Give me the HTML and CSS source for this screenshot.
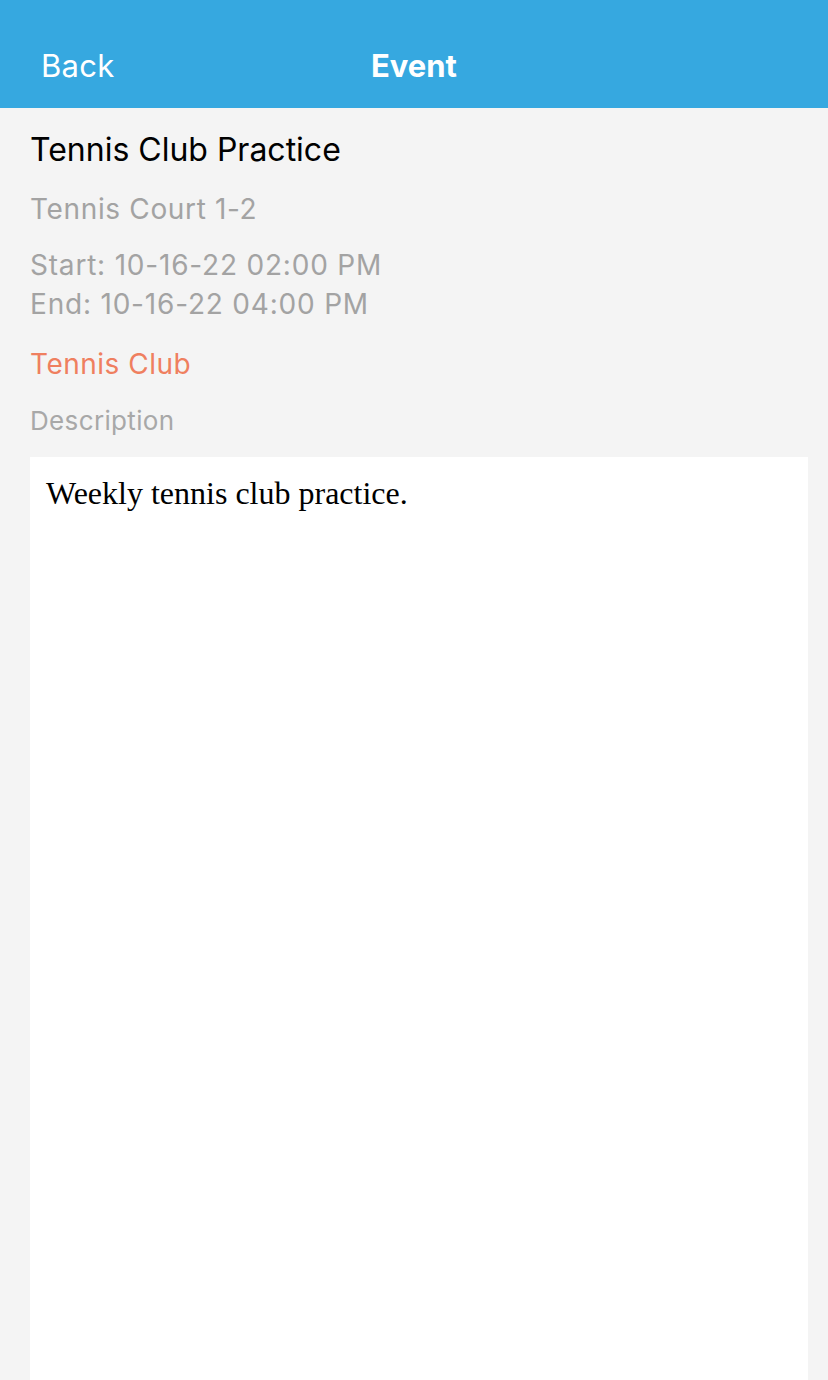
FILE: index.html
```html
<!DOCTYPE html>
<html>
<head>
<meta charset="utf-8">
<link rel="stylesheet" href="styles.css">
</head>
<body>
<header class="nav">
  <div class="nav-back">Back</div>
  <div class="nav-title">Event</div>
</header>
<main class="content">
  <div class="title">Tennis Club Practice</div>
  <div class="location">Tennis Court 1-2</div>
  <div class="times">
    <div>Start: 10-16-22 02:00 PM</div>
    <div>End: 10-16-22 04:00 PM</div>
  </div>
  <div class="club">Tennis Club</div>
  <div class="desc-label">Description</div>
  <div class="desc-box">Weekly tennis club practice.</div>
</main>
</body>
</html>
```
FILE: styles.css
```css
html, body {
  margin: 0;
  padding: 0;
  height: 100%;
}
body {
  background: #f4f4f4;
  font-family: Inter, "Liberation Sans", sans-serif;
  display: flex;
  flex-direction: column;
  overflow: hidden;
}
.nav {
  height: 108px;
  background: #36a8e0;
  color: #fff;
  display: grid;
  grid-template-columns: 1fr auto 1fr;
  align-items: center;
  padding: 0 41px;
  padding-top: 22px;
  box-sizing: border-box;
  font-size: 31px;
  flex-shrink: 0;
}
.nav-back {
  font-weight: 400;
  letter-spacing: 0.3px;
}
.nav-title {
  font-weight: 700;
}
.content {
  flex: 1;
  display: flex;
  flex-direction: column;
  padding: 0 20px 0 30px;
}
.title {
  font-size: 32px;
  color: #000;
  margin-top: 23px;
  line-height: 38px;
}
.location {
  font-size: 28px;
  letter-spacing: 0.65px;
  color: #a3a3a3;
  margin-top: 22px;
  line-height: 36px;
}
.times {
  font-size: 28px;
  letter-spacing: 0.8px;
  color: #a3a3a3;
  margin-top: 19px;
  line-height: 39px;
}
.club {
  font-size: 28px;
  letter-spacing: 0.5px;
  color: #ef7f5f;
  margin-top: 22px;
  line-height: 36px;
}
.desc-label {
  font-size: 26px;
  letter-spacing: 0.35px;
  color: #a8a8a8;
  margin-top: 22px;
  line-height: 34px;
}
.desc-box {
  flex: 1;
  background: #fff;
  margin-top: 19px;
  padding: 18px 16px;
  font-family: "Liberation Serif", serif;
  font-size: 32px;
  color: #000;
  line-height: 36px;
}
```
